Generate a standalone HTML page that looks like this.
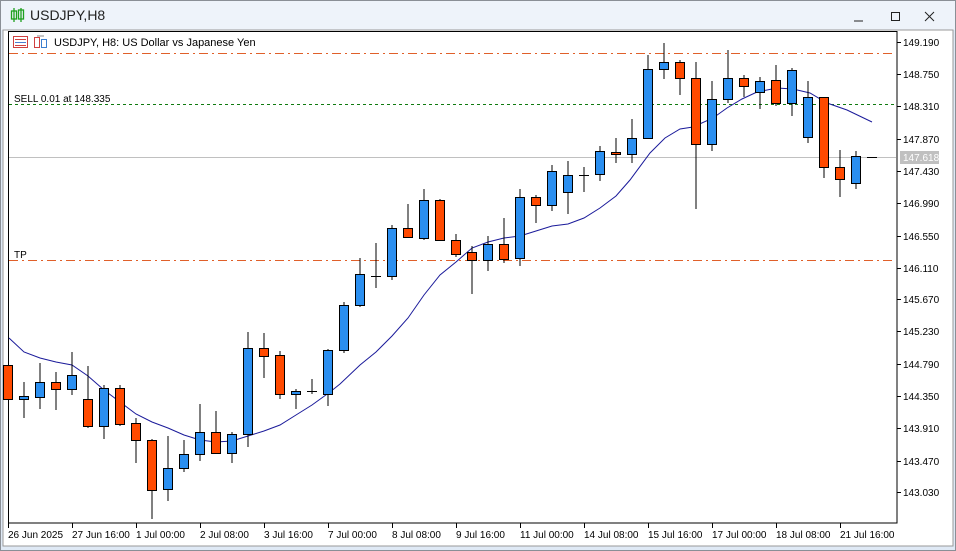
<!DOCTYPE html>
<html><head><meta charset="utf-8"><style>
html,body{margin:0;padding:0;background:#fff}
body{width:956px;height:551px;overflow:hidden;position:relative;font-family:"Liberation Sans",sans-serif}
</style></head><body>
<svg width="956" height="551" viewBox="0 0 956 551" xmlns="http://www.w3.org/2000/svg" style="position:absolute;left:0;top:0">
<rect x="0" y="0" width="956" height="551" fill="#dfe9f5"/>
<rect x="0.5" y="0.5" width="955" height="550" fill="none" stroke="#8a8f96"/>
<rect x="1" y="1" width="954" height="29" fill="#eef3fa"/>
<g stroke="#1ea01e" fill="none" stroke-width="1.3">
<line x1="14" y1="8" x2="14" y2="22"/><rect x="11.5" y="11" width="5" height="8"/>
<line x1="21" y1="8" x2="21" y2="22"/><rect x="18.5" y="10" width="5" height="9"/>
</g>
<text x="30" y="20" font-size="14" fill="#222">USDJPY,H8</text>
<line x1="854" y1="21" x2="863" y2="21" stroke="#222"/>
<rect x="891.5" y="12.5" width="8" height="8" fill="none" stroke="#222"/>
<path d="M925 12 L934 21 M934 12 L925 21" stroke="#222"/>
<rect x="3" y="30" width="950" height="516" fill="#fff"/>
<rect x="3" y="30" width="950" height="516" fill="none" stroke="#999"/>
<rect x="8.5" y="31.5" width="888.5" height="491.5" fill="none" stroke="#000"/>
<!-- header icons -->
<rect x="13.5" y="36.5" width="14" height="11" fill="none" stroke="#d04040"/>
<line x1="15" y1="39.5" x2="26" y2="39.5" stroke="#d04040"/><line x1="15" y1="42.5" x2="26" y2="42.5" stroke="#4a7fd0"/><line x1="15" y1="45.5" x2="26" y2="45.5" stroke="#d04040"/>
<rect x="34.5" y="37.5" width="5" height="10" fill="none" stroke="#d04040"/><rect x="41.5" y="39.5" width="5" height="8" fill="none" stroke="#3b7fd0"/><line x1="37" y1="36" x2="44" y2="36" stroke="#888"/>
<text x="54" y="46" font-size="11" fill="#000">USDJPY, H8:  US Dollar vs Japanese Yen</text>
<!-- horizontal lines -->
<line x1="9" y1="53.5" x2="896" y2="53.5" stroke="#e0602a" stroke-dasharray="9,4,2,4"/>
<line x1="9" y1="104.5" x2="896" y2="104.5" stroke="#107a10" stroke-dasharray="3,3"/>
<line x1="9" y1="157.5" x2="896" y2="157.5" stroke="#c0c0c0"/>
<line x1="9" y1="260.5" x2="896" y2="260.5" stroke="#e0602a" stroke-dasharray="9,4,2,4"/>
<text x="14" y="102" font-size="10" fill="#000">SELL 0.01 at 148.335</text>
<text x="14" y="258" font-size="10" fill="#000">TP</text>
<!-- MA -->
<polyline fill="none" stroke="#1a1a9a" stroke-width="1" points="9,338 24,352 40,358 56,362 72,365 88,376 104,390 120,402 136,414 152,422 168,428 184,435 200,440 216,442 232,441 248,436 264,431 280,425 296,415 312,405 330,392 340,384 360,365 376,352 392,336 408,318 424,295 440,275 456,262 472,248 488,242 504,238 520,236 536,231 552,226 568,224 584,218 600,208 616,196 630,180 650,153 665,138 680,129 693,127 713,118 727,108 742,99 757,92 777,88 793,89 810,93 827,103 847,110 872,122"/>
<g id="c" stroke="#000" stroke-width="1">
<script type="text/plain"></script>
</g>
<g stroke="#000" stroke-width="1">
<!-- wicks -->
<path d="M24 382V418M40 363V409M56 372V410M72 352V395M88 366V428M104 385V439M120 385V426M136 418V463M152 439V519M168 436V501M184 440V472M200 404V461M216 411V454M232 432V463M248 332V447M264 333V378M280 351V399M296 389V409M312 379V394M328 349V406M344 302V353M360 258V307M376 243V288M392 225V280M408 204V238M424 189V240M440 199V241M456 234V257M472 246V294M488 236V271M504 218V263M520 189V266M536 195V223M552 165V211M568 161V214M584 167V192M600 146V181M616 138V163M632 119V163M648 55V138M664 43V79M680 60V95M696 62V209M712 81V151M728 50V103M744 75V97M760 77V109M776 65V106M792 68V116M808 81V143M824 97V178M840 150V197M856 151V189"/>
<!-- dojis -->
<path d="M307 391.5H317M371 276.5H381M579 175.5H589M867 157.5H877M291 392.5H301"/>
</g>
<g stroke="#000" stroke-width="1">
<rect x="3.5" y="365.5" width="9" height="34" fill="#ff4a00"/>
<rect x="19.5" y="396.5" width="9" height="3" fill="#2b8ff0"/>
<rect x="35.5" y="382.5" width="9" height="15" fill="#2b8ff0"/>
<rect x="51.5" y="382.5" width="9" height="7" fill="#ff4a00"/>
<rect x="67.5" y="375.5" width="9" height="14" fill="#2b8ff0"/>
<rect x="83.5" y="399.5" width="9" height="27" fill="#ff4a00"/>
<rect x="99.5" y="388.5" width="9" height="38" fill="#2b8ff0"/>
<rect x="115.5" y="388.5" width="9" height="36" fill="#ff4a00"/>
<rect x="131.5" y="423.5" width="9" height="17" fill="#ff4a00"/>
<rect x="147.5" y="440.5" width="9" height="50" fill="#ff4a00"/>
<rect x="163.5" y="468.5" width="9" height="21" fill="#2b8ff0"/>
<rect x="179.5" y="454.5" width="9" height="14" fill="#2b8ff0"/>
<rect x="195.5" y="432.5" width="9" height="22" fill="#2b8ff0"/>
<rect x="211.5" y="432.5" width="9" height="21" fill="#ff4a00"/>
<rect x="227.5" y="434.5" width="9" height="19" fill="#2b8ff0"/>
<rect x="243.5" y="348.5" width="9" height="86" fill="#2b8ff0"/>
<rect x="259.5" y="348.5" width="9" height="8" fill="#ff4a00"/>
<rect x="275.5" y="355.5" width="9" height="39" fill="#ff4a00"/>
<rect x="291.5" y="391.5" width="9" height="3" fill="#2b8ff0"/>
<rect x="323.5" y="350.5" width="9" height="44" fill="#2b8ff0"/>
<rect x="339.5" y="305.5" width="9" height="45" fill="#2b8ff0"/>
<rect x="355.5" y="274.5" width="9" height="31" fill="#2b8ff0"/>
<rect x="387.5" y="228.5" width="9" height="48" fill="#2b8ff0"/>
<rect x="403.5" y="228.5" width="9" height="9" fill="#ff4a00"/>
<rect x="419.5" y="200.5" width="9" height="38" fill="#2b8ff0"/>
<rect x="435.5" y="200.5" width="9" height="40" fill="#ff4a00"/>
<rect x="451.5" y="240.5" width="9" height="14" fill="#ff4a00"/>
<rect x="467.5" y="252.5" width="9" height="8" fill="#ff4a00"/>
<rect x="483.5" y="244.5" width="9" height="16" fill="#2b8ff0"/>
<rect x="499.5" y="244.5" width="9" height="15" fill="#ff4a00"/>
<rect x="515.5" y="197.5" width="9" height="61" fill="#2b8ff0"/>
<rect x="531.5" y="197.5" width="9" height="8" fill="#ff4a00"/>
<rect x="547.5" y="171.5" width="9" height="34" fill="#2b8ff0"/>
<rect x="563.5" y="175.5" width="9" height="17" fill="#2b8ff0"/>
<rect x="595.5" y="151.5" width="9" height="23" fill="#2b8ff0"/>
<rect x="611.5" y="152.5" width="9" height="2" fill="#ff4a00"/>
<rect x="627.5" y="138.5" width="9" height="16" fill="#2b8ff0"/>
<rect x="643.5" y="69.5" width="9" height="69" fill="#2b8ff0"/>
<rect x="659.5" y="62.5" width="9" height="7" fill="#2b8ff0"/>
<rect x="675.5" y="62.5" width="9" height="16" fill="#ff4a00"/>
<rect x="691.5" y="78.5" width="9" height="66" fill="#ff4a00"/>
<rect x="707.5" y="99.5" width="9" height="45" fill="#2b8ff0"/>
<rect x="723.5" y="78.5" width="9" height="21" fill="#2b8ff0"/>
<rect x="739.5" y="78.5" width="9" height="8" fill="#ff4a00"/>
<rect x="755.5" y="81.5" width="9" height="11" fill="#2b8ff0"/>
<rect x="771.5" y="80.5" width="9" height="23" fill="#ff4a00"/>
<rect x="787.5" y="70.5" width="9" height="33" fill="#2b8ff0"/>
<rect x="803.5" y="97.5" width="9" height="40" fill="#2b8ff0"/>
<rect x="819.5" y="97.5" width="9" height="70" fill="#ff4a00"/>
<rect x="835.5" y="167.5" width="9" height="12" fill="#ff4a00"/>
<rect x="851.5" y="156.5" width="9" height="27" fill="#2b8ff0"/>
</g>
<!-- price axis -->
<g stroke="#000"><path d="M897 42.5H901M897 74.5H901M897 106.5H901M897 139.5H901M897 171.5H901M897 203.5H901M897 236.5H901M897 268.5H901M897 299.5H901M897 331.5H901M897 364.5H901M897 396.5H901M897 428.5H901M897 461.5H901M897 492.5H901"/>
<path d="M8.5 523V528M72.5 523V528M136.5 523V528M200.5 523V528M264.5 523V528M328.5 523V528M392.5 523V528M456.5 523V528M520.5 523V528M584.5 523V528M648.5 523V528M712.5 523V528M776.5 523V528M840.5 523V528"/></g>
<g font-size="10" fill="#000">
<text x="903" y="46">149.190</text><text x="903" y="78">148.750</text><text x="903" y="110">148.310</text><text x="903" y="143">147.870</text><text x="903" y="175">147.430</text><text x="903" y="207">146.990</text><text x="903" y="240">146.550</text><text x="903" y="272">146.110</text><text x="903" y="303">145.670</text><text x="903" y="335">145.230</text><text x="903" y="368">144.790</text><text x="903" y="400">144.350</text><text x="903" y="432">143.910</text><text x="903" y="465">143.470</text><text x="903" y="496">143.030</text>
</g>
<rect x="900" y="151" width="39" height="13" fill="#c0c0c0"/>
<text x="903" y="161" font-size="10" fill="#fff">147.618</text>
<g font-size="10" fill="#000">
<text x="8" y="538">26 Jun 2025</text><text x="72" y="538">27 Jun 16:00</text><text x="136" y="538">1 Jul 00:00</text><text x="200" y="538">2 Jul 08:00</text><text x="264" y="538">3 Jul 16:00</text><text x="328" y="538">7 Jul 00:00</text><text x="392" y="538">8 Jul 08:00</text><text x="456" y="538">9 Jul 16:00</text><text x="520" y="538">11 Jul 00:00</text><text x="584" y="538">14 Jul 08:00</text><text x="648" y="538">15 Jul 16:00</text><text x="712" y="538">17 Jul 00:00</text><text x="776" y="538">18 Jul 08:00</text><text x="840" y="538">21 Jul 16:00</text>
</g>
</svg>
</body></html>
